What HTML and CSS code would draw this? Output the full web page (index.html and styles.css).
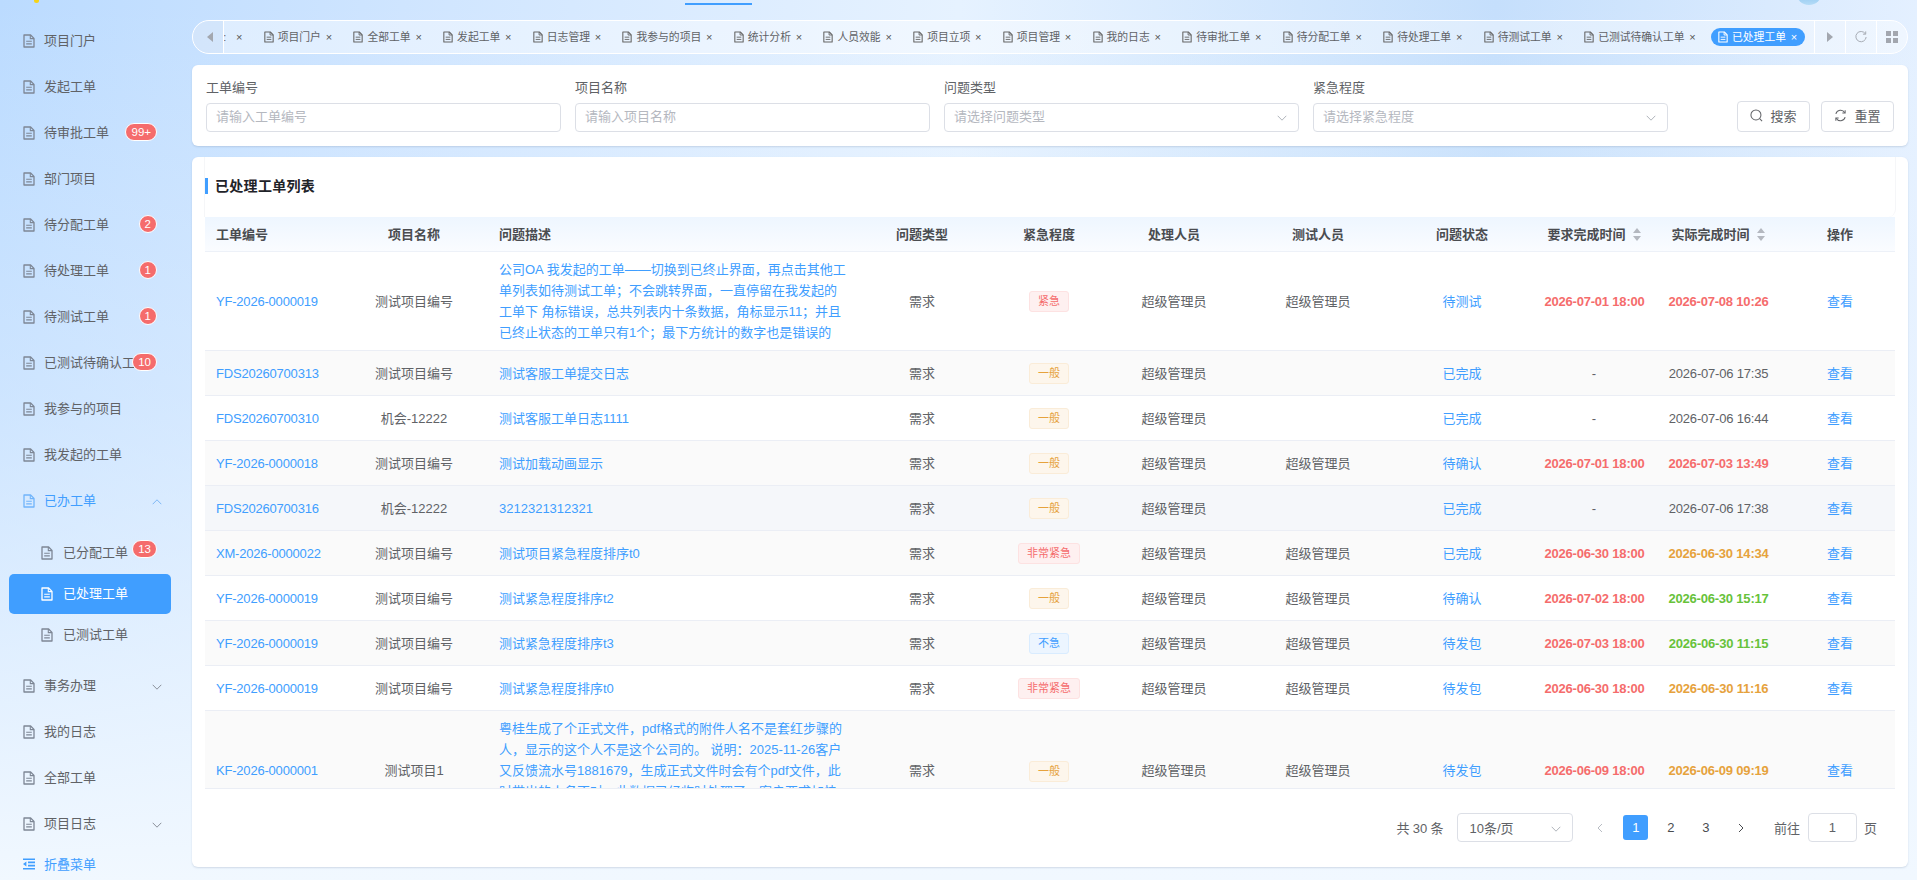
FILE: index.html
```html
<!DOCTYPE html>
<html lang="zh-CN">
<head>
<meta charset="utf-8">
<title>已处理工单</title>
<link rel="stylesheet" href="styles.css">
</head>
<body>
<svg class="sprite" xmlns="http://www.w3.org/2000/svg">
  <symbol id="doc" viewBox="0 0 12 14"><path d="M1 1h6.6L11 4.4V13H1z" fill="none" stroke="currentColor" stroke-width="1.3" stroke-linejoin="round"/><path d="M7.3 1v3.6H11M3.2 7.2h5.6M3.2 9.9h5.6" fill="none" stroke="currentColor" stroke-width="1.1"/></symbol>
  <symbol id="down" viewBox="0 0 10 6"><path d="M.7.8 5 5.2 9.3.8" fill="none" stroke="currentColor" stroke-width="1"/></symbol>
  <symbol id="up" viewBox="0 0 10 6"><path d="M.7 5.2 5 .8l4.3 4.4" fill="none" stroke="currentColor" stroke-width="1"/></symbol>
  <symbol id="sort" viewBox="0 0 8 13"><path d="M4 0l4 5H0zM4 13 0 8h8z" fill="currentColor"/></symbol>
</svg>
<div class="app">
  <aside class="sidebar">
    <div class="logo-sliver"></div>
    <nav class="menu">
      <a class="item"><svg class="ic"><use href="#doc"/></svg><span class="lbl">项目门户</span></a>
      <a class="item"><svg class="ic"><use href="#doc"/></svg><span class="lbl">发起工单</span></a>
      <a class="item"><svg class="ic"><use href="#doc"/></svg><span class="lbl">待审批工单</span><b class="badge">99+</b></a>
      <a class="item"><svg class="ic"><use href="#doc"/></svg><span class="lbl">部门项目</span></a>
      <a class="item"><svg class="ic"><use href="#doc"/></svg><span class="lbl">待分配工单</span><b class="badge">2</b></a>
      <a class="item"><svg class="ic"><use href="#doc"/></svg><span class="lbl">待处理工单</span><b class="badge">1</b></a>
      <a class="item"><svg class="ic"><use href="#doc"/></svg><span class="lbl">待测试工单</span><b class="badge">1</b></a>
      <a class="item"><svg class="ic"><use href="#doc"/></svg><span class="lbl lbl-clip">已测试待确认工单</span><b class="badge">10</b></a>
      <a class="item"><svg class="ic"><use href="#doc"/></svg><span class="lbl">我参与的项目</span></a>
      <a class="item"><svg class="ic"><use href="#doc"/></svg><span class="lbl">我发起的工单</span></a>
      <a class="item item-open"><svg class="ic"><use href="#doc"/></svg><span class="lbl">已办工单</span><svg class="chev"><use href="#up"/></svg></a>
      <div class="submenu">
        <a class="sub"><svg class="ic"><use href="#doc"/></svg><span class="lbl">已分配工单</span><b class="badge badge-sub">13</b></a>
        <a class="sub sub-active"><svg class="ic"><use href="#doc"/></svg><span class="lbl">已处理工单</span></a>
        <a class="sub"><svg class="ic"><use href="#doc"/></svg><span class="lbl">已测试工单</span></a>
      </div>
      <a class="item"><svg class="ic"><use href="#doc"/></svg><span class="lbl">事务办理</span><svg class="chev"><use href="#down"/></svg></a>
      <a class="item"><svg class="ic"><use href="#doc"/></svg><span class="lbl">我的日志</span></a>
      <a class="item"><svg class="ic"><use href="#doc"/></svg><span class="lbl">全部工单</span></a>
      <a class="item"><svg class="ic"><use href="#doc"/></svg><span class="lbl">项目日志</span><svg class="chev"><use href="#down"/></svg></a>
    </nav>
    <div class="collapse">
      <svg class="ic" viewBox="0 0 12 12"><path d="M0 1.2h12M5 4.4h7M5 7.6h7M0 10.8h12" fill="none" stroke="currentColor" stroke-width="1.6"/><path d="M3.4 3.6v4.8L0 6z" fill="currentColor"/></svg>
      <span>折叠菜单</span>
    </div>
  </aside>

  <main class="main">
    <div class="topstrip">
      <div class="indicator"></div>
      <div class="avatar"></div>
    </div>

    <div class="tabbar">
      <div class="tb-btn tb-left"><svg class="tri" viewBox="0 0 8 12"><path d="M7 1v10L1 6z" fill="currentColor"/></svg></div>
      <div class="tabs">
        <span class="tab tab-cut"><span>:</span><i class="x">×</i></span>
        <span class="tab"><svg class="tic"><use href="#doc"/></svg><span>项目门户</span><i class="x">×</i></span>
        <span class="tab"><svg class="tic"><use href="#doc"/></svg><span>全部工单</span><i class="x">×</i></span>
        <span class="tab"><svg class="tic"><use href="#doc"/></svg><span>发起工单</span><i class="x">×</i></span>
        <span class="tab"><svg class="tic"><use href="#doc"/></svg><span>日志管理</span><i class="x">×</i></span>
        <span class="tab"><svg class="tic"><use href="#doc"/></svg><span>我参与的项目</span><i class="x">×</i></span>
        <span class="tab"><svg class="tic"><use href="#doc"/></svg><span>统计分析</span><i class="x">×</i></span>
        <span class="tab"><svg class="tic"><use href="#doc"/></svg><span>人员效能</span><i class="x">×</i></span>
        <span class="tab"><svg class="tic"><use href="#doc"/></svg><span>项目立项</span><i class="x">×</i></span>
        <span class="tab"><svg class="tic"><use href="#doc"/></svg><span>项目管理</span><i class="x">×</i></span>
        <span class="tab"><svg class="tic"><use href="#doc"/></svg><span>我的日志</span><i class="x">×</i></span>
        <span class="tab"><svg class="tic"><use href="#doc"/></svg><span>待审批工单</span><i class="x">×</i></span>
        <span class="tab"><svg class="tic"><use href="#doc"/></svg><span>待分配工单</span><i class="x">×</i></span>
        <span class="tab"><svg class="tic"><use href="#doc"/></svg><span>待处理工单</span><i class="x">×</i></span>
        <span class="tab"><svg class="tic"><use href="#doc"/></svg><span>待测试工单</span><i class="x">×</i></span>
        <span class="tab"><svg class="tic"><use href="#doc"/></svg><span>已测试待确认工单</span><i class="x">×</i></span>
        <span class="tab tab-active"><svg class="tic"><use href="#doc"/></svg><span>已处理工单</span><i class="x">×</i></span>
      </div>
      <div class="tb-btn tb-line"><svg class="tri" viewBox="0 0 8 12"><path d="M1 1v10l6-5z" fill="currentColor"/></svg></div>
      <div class="tb-btn tb-line"><svg class="tb-ic" viewBox="0 0 14 14"><path d="M12 3.2A6 6 0 1 0 13 7" fill="none" stroke="currentColor" stroke-width="1.1"/><path d="M12.5 .5v3.2H9.3" fill="none" stroke="currentColor" stroke-width="1.1"/></svg></div>
      <div class="tb-btn tb-line"><svg class="tb-ic" viewBox="0 0 12 12"><path d="M0 0h5v5H0zM7 0h5v5H7zM0 7h5v5H0zM7 7h5v5H7z" fill="currentColor"/></svg></div>
    </div>

    <section class="card filter">
      <div class="fields">
        <div class="field"><label class="f-label">工单编号</label><div class="f-input">请输入工单编号</div></div>
        <div class="field"><label class="f-label">项目名称</label><div class="f-input">请输入项目名称</div></div>
        <div class="field"><label class="f-label">问题类型</label><div class="f-input f-select"><span>请选择问题类型</span><svg class="sel-chev"><use href="#down"/></svg></div></div>
        <div class="field"><label class="f-label">紧急程度</label><div class="f-input f-select"><span>请选择紧急程度</span><svg class="sel-chev"><use href="#down"/></svg></div></div>
      </div>
      <div class="actions">
        <button class="btn"><svg class="btn-ic" viewBox="0 0 14 14"><circle cx="6.4" cy="6.4" r="5.4" fill="none" stroke="currentColor" stroke-width="1.1"/><path d="M10.4 10.4 13 13" stroke="currentColor" stroke-width="1.1"/></svg>搜索</button>
        <button class="btn"><svg class="btn-ic" viewBox="0 0 14 14"><path d="M2 5.2A5.2 5.2 0 0 1 11.6 4M12 8.8A5.2 5.2 0 0 1 2.4 10" fill="none" stroke="currentColor" stroke-width="1.1"/><path d="M12 1.4V4.4H9M2 12.6V9.6H5" fill="none" stroke="currentColor" stroke-width="1.1"/></svg>重置</button>
      </div>
    </section>

    <section class="card list">
      <div class="list-head"><h2 class="list-title">已处理工单列表</h2></div>
      <div class="table-wrap">
        <table class="grid">
          <colgroup>
            <col class="c1"><col class="c2"><col class="c3"><col class="c4"><col class="c5"><col class="c6"><col class="c7"><col class="c8"><col class="c9"><col class="c9"><col class="c11">
          </colgroup>
          <thead>
            <tr>
              <th class="left">工单编号</th><th>项目名称</th><th class="left">问题描述</th><th>问题类型</th><th>紧急程度</th><th>处理人员</th><th>测试人员</th><th>问题状态</th>
              <th>要求完成时间<svg class="sort"><use href="#sort"/></svg></th>
              <th>实际完成时间<svg class="sort"><use href="#sort"/></svg></th>
              <th class="op">操作</th>
            </tr>
          </thead>
          <tbody>
            <tr>
              <td class="left link code">YF-2026-0000019</td><td>测试项目编号</td>
              <td class="left link">公司OA 我发起的工单——切换到已终止界面，再点击其他工<br>单列表如待测试工单；不会跳转界面，一直停留在我发起的<br>工单下 角标错误，总共列表内十条数据，角标显示11；并且<br>已终止状态的工单只有1个；最下方统计的数字也是错误的</td>
              <td>需求</td><td><span class="tag tag-red">紧急</span></td><td>超级管理员</td><td>超级管理员</td><td class="link">待测试</td>
              <td class="time red">2026-07-01 18:00</td><td class="time red">2026-07-08 10:26</td><td class="link op">查看</td>
            </tr>
            <tr class="alt">
              <td class="left link code">FDS20260700313</td><td>测试项目编号</td><td class="left link">测试客服工单提交日志</td>
              <td>需求</td><td><span class="tag tag-orange">一般</span></td><td>超级管理员</td><td></td><td class="link">已完成</td>
              <td>-</td><td class="time">2026-07-06 17:35</td><td class="link op">查看</td>
            </tr>
            <tr>
              <td class="left link code">FDS20260700310</td><td>机会-12222</td><td class="left link">测试客服工单日志1111</td>
              <td>需求</td><td><span class="tag tag-orange">一般</span></td><td>超级管理员</td><td></td><td class="link">已完成</td>
              <td>-</td><td class="time">2026-07-06 16:44</td><td class="link op">查看</td>
            </tr>
            <tr class="alt">
              <td class="left link code">YF-2026-0000018</td><td>测试项目编号</td><td class="left link">测试加载动画显示</td>
              <td>需求</td><td><span class="tag tag-orange">一般</span></td><td>超级管理员</td><td>超级管理员</td><td class="link">待确认</td>
              <td class="time red">2026-07-01 18:00</td><td class="time red">2026-07-03 13:49</td><td class="link op">查看</td>
            </tr>
            <tr class="hover">
              <td class="left link code">FDS20260700316</td><td>机会-12222</td><td class="left link">3212321312321</td>
              <td>需求</td><td><span class="tag tag-orange">一般</span></td><td>超级管理员</td><td></td><td class="link">已完成</td>
              <td>-</td><td class="time">2026-07-06 17:38</td><td class="link op">查看</td>
            </tr>
            <tr class="alt">
              <td class="left link code">XM-2026-0000022</td><td>测试项目编号</td><td class="left link">测试项目紧急程度排序t0</td>
              <td>需求</td><td><span class="tag tag-red">非常紧急</span></td><td>超级管理员</td><td>超级管理员</td><td class="link">已完成</td>
              <td class="time red">2026-06-30 18:00</td><td class="time orange">2026-06-30 14:34</td><td class="link op">查看</td>
            </tr>
            <tr>
              <td class="left link code">YF-2026-0000019</td><td>测试项目编号</td><td class="left link">测试紧急程度排序t2</td>
              <td>需求</td><td><span class="tag tag-orange">一般</span></td><td>超级管理员</td><td>超级管理员</td><td class="link">待确认</td>
              <td class="time red">2026-07-02 18:00</td><td class="time green">2026-06-30 15:17</td><td class="link op">查看</td>
            </tr>
            <tr class="alt">
              <td class="left link code">YF-2026-0000019</td><td>测试项目编号</td><td class="left link">测试紧急程度排序t3</td>
              <td>需求</td><td><span class="tag tag-blue">不急</span></td><td>超级管理员</td><td>超级管理员</td><td class="link">待发包</td>
              <td class="time red">2026-07-03 18:00</td><td class="time green">2026-06-30 11:15</td><td class="link op">查看</td>
            </tr>
            <tr>
              <td class="left link code">YF-2026-0000019</td><td>测试项目编号</td><td class="left link">测试紧急程度排序t0</td>
              <td>需求</td><td><span class="tag tag-red">非常紧急</span></td><td>超级管理员</td><td>超级管理员</td><td class="link">待发包</td>
              <td class="time red">2026-06-30 18:00</td><td class="time orange">2026-06-30 11:16</td><td class="link op">查看</td>
            </tr>
            <tr class="alt">
              <td class="left link code">KF-2026-0000001</td><td>测试项目1</td>
              <td class="left link">粤桂生成了个正式文件，pdf格式的附件人名不是套红步骤的<br>人，显示的这个人不是这个公司的。 说明：2025-11-26客户<br>又反馈流水号1881679，生成正式文件时会有个pdf文件，此<br>时带出的人名不对，此数据已经临时处理了，客户要求加快<br>处理。</td>
              <td>需求</td><td><span class="tag tag-orange">一般</span></td><td>超级管理员</td><td>超级管理员</td><td class="link">待发包</td>
              <td class="time red">2026-06-09 18:00</td><td class="time orange">2026-06-09 09:19</td><td class="link op">查看</td>
            </tr>
          </tbody>
        </table>
      </div>
      <div class="pager">
        <span class="p-total">共 30 条</span>
        <div class="p-size"><span>10条/页</span><svg class="sel-chev"><use href="#down"/></svg></div>
        <svg class="p-arrow p-prev" viewBox="0 0 6 10"><path d="M5 1 1 5l4 4" fill="none" stroke="currentColor"/></svg>
        <span class="p-num p-on">1</span><span class="p-num">2</span><span class="p-num">3</span>
        <svg class="p-arrow p-next" viewBox="0 0 6 10"><path d="M1 1l4 4-4 4" fill="none" stroke="currentColor"/></svg>
        <span class="p-goto">前往</span>
        <div class="p-input">1</div>
        <span class="p-unit">页</span>
      </div>
    </section>
  </main>
</div>
</body>
</html>
```
FILE: styles.css
```css
* { box-sizing: border-box; }
html, body { margin: 0; height: 100%; }
body {
  width: 1917px;
  height: 880px;
  overflow: hidden;
  font-family: "Liberation Sans", "Noto Sans CJK SC", sans-serif;
  font-size: 13px;
  color: #606266;
  background:
    linear-gradient(180deg, rgba(240,247,255,0) 0%, rgba(240,247,255,.35) 45%, #f1f8ff 100%),
    linear-gradient(90deg, #bbdbff 0%, #cfe5ff 21%, #e6f2ff 50%, #c5dffc 78%, #e4f0ff 100%);
}
.sprite { display: none; }
.app { display: flex; height: 880px; }

/* sidebar */
.sidebar { position: relative; width: 192px; flex: none; padding-top: 18px; display: flex; flex-direction: column; }
.logo-sliver { position: absolute; left: 34px; top: -2px; width: 5px; height: 5px; border-radius: 50%; background: #f5d316; }
.menu { display: flex; flex-direction: column; }
.item { position: relative; display: flex; align-items: center; height: 46px; padding-left: 23px; white-space: nowrap; }
.ic { width: 12px; height: 14px; flex: none; margin-right: 9px; color: #7d8695; }
.lbl { line-height: 18px; }
.lbl-clip { width: 91px; overflow: hidden; }
.chev { width: 10px; height: 6px; position: absolute; left: 152px; top: 21px; color: #8a909a; }
.item-open { color: #409eff; }
.item-open .ic { color: #70b4fb; }
.item-open .chev { color: #7fb8f5; }
.submenu { display: flex; flex-direction: column; gap: 1px; padding: 9px 0 8px; }
.sub { position: relative; display: flex; align-items: center; height: 40px; margin: 0 21px 0 9px; padding-left: 32px; border-radius: 5px; }
.sub .ic { margin-right: 10px; }
.sub-active { background: #409eff; color: #fff; }
.sub-active .ic { color: #fff; }
.badge {
  position: absolute; right: 35px; top: 13px;
  min-width: 18px; height: 18px; padding: 0 5px;
  border: 1px solid #fff; border-radius: 9px;
  background: #f56c6c; color: #fff;
  font-size: 11.5px; font-weight: 400; line-height: 16px; text-align: center;
}
.badge-sub { right: 14px; top: 7px; }
.collapse { margin-top: auto; height: 34px; display: flex; align-items: center; padding-left: 23px; color: #409eff; }
.collapse .ic { height: 12px; color: #409eff; }

/* main */
.main { width: 1725px; padding-right: 9px; display: flex; flex-direction: column; }
.topstrip { height: 20px; display: flex; align-items: flex-start; overflow: hidden; flex: none; }
.indicator { width: 67px; height: 2px; margin: 3px 0 0 493px; background: #409eff; }
.avatar { width: 26px; height: 26px; margin: -21px 86px 0 auto; border-radius: 50%; background: linear-gradient(180deg, #5aa9e6, #b5dcf7); }

/* tabs */
.tabbar { flex: none; display: flex; height: 34px; margin-bottom: 11px; border: 1px solid #fff; border-radius: 17px; background: rgba(255,255,255,.42); overflow: hidden; }
.tb-btn { flex: none; display: flex; align-items: center; justify-content: center; width: 31px; color: #a3a7af; }
.tb-left { border-right: 1px solid #fff; background: rgba(170,200,235,.2); padding-left: 3px; }
.tb-line { border-left: 1px solid #fff; }
.tri { width: 8px; height: 12px; }
.tb-ic { width: 12px; height: 12px; }
.tabs { flex: 1; min-width: 0; display: flex; justify-content: flex-end; align-items: center; overflow: hidden; padding-right: 9px; }
.tab { flex: none; display: flex; align-items: center; height: 18px; padding: 0 6px; margin-left: 8.5px; border-radius: 9px; font-size: 10.8px; line-height: 18px; white-space: nowrap; color: #606266; }
.tab-cut { gap: 5px; }
.tic { width: 10px; height: 12px; margin-right: 4px; color: #666; flex: none; }
.x { width: 8px; margin-left: 4px; font-style: normal; text-align: center; font-size: 11px; color: #555; }
.tab-active { background: #409eff; color: #fff; padding: 0 7px; }
.tab-active .tic, .tab-active .x { color: #fff; }

/* cards */
.card { background: #fff; border-radius: 6px; box-shadow: 0 1px 2px rgba(120,140,170,.28); }
.filter { flex: none; display: flex; justify-content: space-between; align-items: flex-end; height: 81px; padding: 14px; margin-bottom: 11px; }
.fields { display: flex; gap: 14px; }
.field { width: 355px; display: flex; flex-direction: column; gap: 6px; }
.f-label { line-height: 18px; }
.f-input { height: 29px; line-height: 25px; padding: 0 9px 2px; border: 1px solid #dcdfe6; border-radius: 4px; color: #b5b8bf; background: #fff; }
.f-select { display: flex; justify-content: space-between; align-items: center; padding-right: 11px; }
.sel-chev { width: 10px; height: 6px; color: #b0b4bb; flex: none; margin-top: 2px; }
.actions { display: flex; gap: 11px; }
.btn { width: 73px; height: 31px; display: flex; align-items: center; justify-content: center; gap: 7px; padding: 0 0 2px; border: 1px solid #dcdfe6; border-radius: 4px; background: #fff; color: #606266; font: inherit; }
.btn-ic { width: 13px; height: 13px; color: #606266; }

.list { flex: none; height: 710px; padding: 0 13px; }
.list-head { height: 60px; padding-top: 21px; border-right: 1px solid #f5f6f8; border-left: 1px solid #f5f6f8; border-bottom-right-radius: 8px; margin-left: -1px; margin-right: -1px; }
.list-title { margin: 0; height: 16px; padding-left: 7px; border-left: 3px solid #409eff; font-size: 14px; letter-spacing: 0.3px; line-height: 16px; font-weight: 700; color: #1f2329; }

/* table */
.table-wrap { height: 572px; overflow: hidden; border-bottom: 1px solid #ebeef5; }
.grid { width: 1690px; table-layout: fixed; border-collapse: separate; border-spacing: 0; }
.c1 { width: 136px; } .c2 { width: 146px; } .c3 { width: 363px; } .c4 { width: 144px; } .c5 { width: 110px; }
.c6 { width: 140px; } .c7 { width: 148px; } .c8 { width: 140px; } .c9 { width: 124px; } .c11 { width: 115px; }
.grid th {
  height: 35px; padding: 0 0 2px; font-weight: 700; font-size: 13px; color: #4a4c50; text-align: center; white-space: nowrap;
  background: linear-gradient(180deg, #eef6ff, #fafcff);
  border-bottom: 1px solid #edf1f8;
}
.grid td { height: 45px; padding: 7px 12px; line-height: 21px; text-align: center; border-bottom: 1px solid #ebeef5; background: #fff; vertical-align: middle; white-space: nowrap; }
.grid .left { text-align: left; }
.grid th.left:first-child, .grid td.left:first-child { padding-left: 11px; }
.grid th.left:nth-child(3), .grid td.left:nth-child(3) { padding-left: 12px; }
.grid .op { padding-left: 17px; padding-right: 12px; }
.grid .alt td { background: #fafafa; }
.grid .hover td { background: #f5f7fa; }
.grid .time { padding-left: 1px; padding-right: 0; letter-spacing: -0.2px; }
.code { letter-spacing: -0.2px; }
.link { color: #409eff; }
.red { color: #f56c6c; font-weight: 700; }
.orange { color: #e6a23c; font-weight: 700; }
.green { color: #67c23a; font-weight: 700; }
.sort { width: 8px; height: 13px; margin-left: 7px; vertical-align: -2px; color: #b4b8c0; }
.tag { display: inline-block; height: 21px; padding: 0 8px; border: 1px solid; border-radius: 3px; font-size: 11px; line-height: 19px; vertical-align: middle; }
.tag-red { background: #fef0f0; border-color: #fde2e2; color: #f56c6c; }
.tag-orange { background: #fdf6ec; border-color: #faecd8; color: #e6a23c; }
.tag-blue { background: #ecf5ff; border-color: #d9ecff; color: #409eff; }

/* pager */
.pager { height: 77px; display: flex; align-items: center; justify-content: flex-end; padding-right: 18px; }
.p-total { margin-right: 14px; letter-spacing: -0.1px; }
.p-size { width: 116px; height: 29px; display: flex; align-items: center; justify-content: space-between; padding: 0 11px; border: 1px solid #dcdfe6; border-radius: 4px; margin-right: 24px; }
.p-arrow { width: 6px; height: 10px; color: #8f939a; flex: none; }
.p-prev { margin-right: 15px; color: #b8bcc3; }
.p-next { margin-left: 14.5px; margin-right: 30px; color: #4a4c50; }
.p-num { width: 25px; height: 25px; margin: 0 5px; text-align: center; line-height: 25px; border-radius: 3px; color: #4a4c50; }
.p-on { background: #409eff; color: #fff; }
.p-goto { margin-right: 8px; }
.p-input { width: 49px; height: 29px; line-height: 27px; text-align: center; border: 1px solid #dcdfe6; border-radius: 4px; margin-right: 7px; }
```
